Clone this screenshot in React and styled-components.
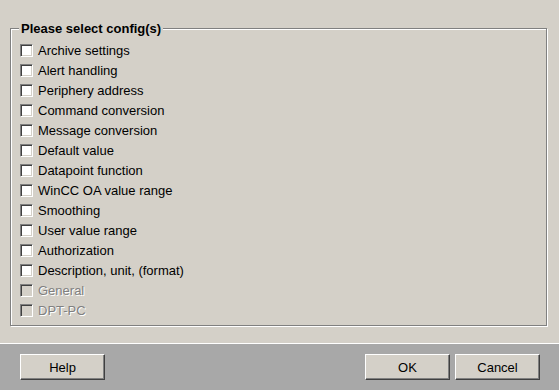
import React from 'react';
import styled, { createGlobalStyle } from 'styled-components';

const GlobalStyle = createGlobalStyle`
  html, body {
    margin: 0;
    padding: 0;
    background: #d4d0c8;
  }
  body {
    font-family: "Liberation Sans", Arial, sans-serif;
    font-size: 13px;
    color: #000;
  }
`;

const configs = [
  { id: 'archive', label: 'Archive settings' },
  { id: 'alert', label: 'Alert handling' },
  { id: 'periphery', label: 'Periphery address' },
  { id: 'command', label: 'Command conversion' },
  { id: 'message', label: 'Message conversion' },
  { id: 'default', label: 'Default value' },
  { id: 'dpfunc', label: 'Datapoint function' },
  { id: 'wincc', label: 'WinCC OA value range' },
  { id: 'smoothing', label: 'Smoothing' },
  { id: 'user', label: 'User value range' },
  { id: 'auth', label: 'Authorization' },
  { id: 'desc', label: 'Description, unit, (format)' },
  { id: 'general', label: 'General', disabled: true },
  { id: 'dptpc', label: 'DPT-PC', disabled: true },
];

const Dialog = styled.div`
  width: 559px;
  height: 390px;
  display: flex;
  flex-direction: column;
  overflow: hidden;
`;

const Main = styled.div`
  flex: 1;
  display: flex;
  flex-direction: column;
  padding: 21px 12px 17px 10px;
`;

const GroupBox = styled.fieldset`
  flex: 1;
  margin: 0;
  padding: 0 0 5px 0;
  border: 1px solid #808080;
  box-shadow: inset 1px 1px 0 #fff, 1px 1px 0 #fff;
  min-width: 0;
`;

const GroupTitle = styled.legend`
  margin-left: 8px;
  padding: 0 2px;
  font-weight: bold;
  font-size: 13px;
  line-height: 15px;
  background: #d4d0c8;
`;

const List = styled.div`
  display: flex;
  flex-direction: column;
  padding: 4px 0 0 9px;
`;

const Row = styled.label`
  display: flex;
  align-items: center;
  gap: 5px;
  height: 20px;
  color: ${({ $disabled }) => ($disabled ? '#808080' : '#000')};
  text-shadow: ${({ $disabled }) => ($disabled ? '1px 1px 0 #fff' : 'none')};
`;

const Box = styled.span`
  box-sizing: border-box;
  width: 13px;
  height: 13px;
  flex: none;
  border: 1px solid;
  border-color: #808080 #fff #fff #808080;
  box-shadow: inset 1px 1px 0 #404040, inset -1px -1px 0 #d4d0c8;
  background: ${({ $disabled }) => ($disabled ? '#d4d0c8' : '#fff')};
`;

const Footer = styled.div`
  height: 45px;
  border-top: 1px solid #fff;
  background: #a8a8a8;
  display: flex;
  justify-content: space-between;
  align-items: flex-start;
  padding: 10px 19px 0 20px;
`;

const ButtonGroup = styled.div`
  display: flex;
  gap: 5px;
`;

const Button = styled.button`
  box-sizing: border-box;
  width: 85px;
  height: 26px;
  padding: 0;
  background: #d4d0c8;
  border: 1px solid;
  border-color: #fff #404040 #404040 #fff;
  box-shadow: inset -1px -1px 0 #808080;
  font-family: "Liberation Sans", Arial, sans-serif;
  font-size: 13px;
  color: #000;
`;

const App = () => (
  <Dialog>
    <GlobalStyle />
    <Main>
      <GroupBox>
        <GroupTitle>Please select config(s)</GroupTitle>
        <List>
          {configs.map((item) => (
            <Row key={item.id} $disabled={item.disabled}>
              <Box $disabled={item.disabled} />
              {item.label}
            </Row>
          ))}
        </List>
      </GroupBox>
    </Main>
    <Footer>
      <Button type="button">Help</Button>
      <ButtonGroup>
        <Button type="button">OK</Button>
        <Button type="button">Cancel</Button>
      </ButtonGroup>
    </Footer>
  </Dialog>
);

export default App;
